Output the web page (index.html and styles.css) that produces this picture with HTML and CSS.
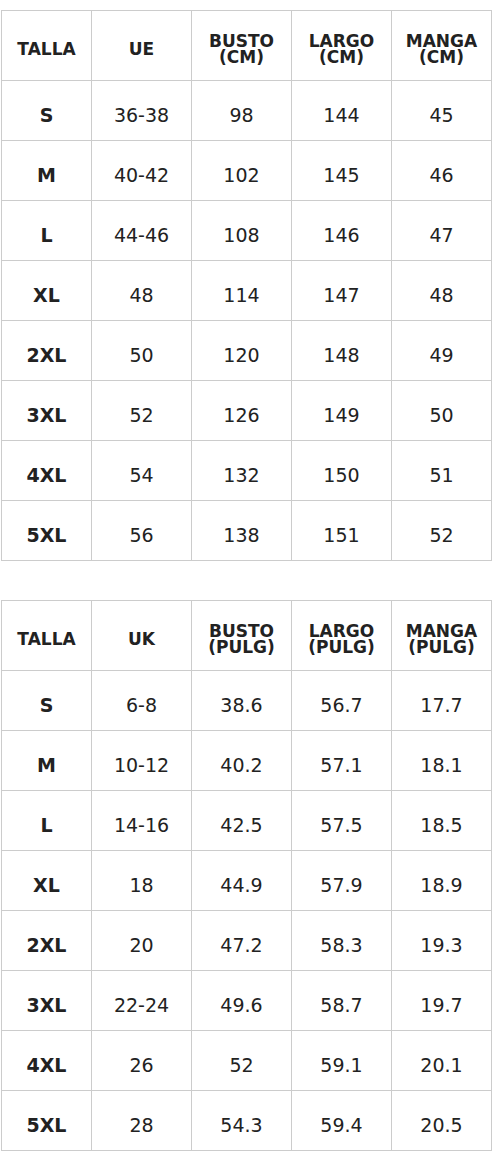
FILE: index.html
```html
<!DOCTYPE html>
<html lang="es">
<head>
<meta charset="utf-8">
<title>Guía de tallas</title>
<link rel="stylesheet" href="styles.css">
</head>
<body>
<div class="size-table">
  <div class="cell head">TALLA</div>
  <div class="cell head">UE</div>
  <div class="cell head">BUSTO<br>(CM)</div>
  <div class="cell head">LARGO<br>(CM)</div>
  <div class="cell head">MANGA<br>(CM)</div>

  <div class="cell size">S</div><div class="cell">36-38</div><div class="cell">98</div><div class="cell">144</div><div class="cell">45</div>
  <div class="cell size">M</div><div class="cell">40-42</div><div class="cell">102</div><div class="cell">145</div><div class="cell">46</div>
  <div class="cell size">L</div><div class="cell">44-46</div><div class="cell">108</div><div class="cell">146</div><div class="cell">47</div>
  <div class="cell size">XL</div><div class="cell">48</div><div class="cell">114</div><div class="cell">147</div><div class="cell">48</div>
  <div class="cell size">2XL</div><div class="cell">50</div><div class="cell">120</div><div class="cell">148</div><div class="cell">49</div>
  <div class="cell size">3XL</div><div class="cell">52</div><div class="cell">126</div><div class="cell">149</div><div class="cell">50</div>
  <div class="cell size">4XL</div><div class="cell">54</div><div class="cell">132</div><div class="cell">150</div><div class="cell">51</div>
  <div class="cell size">5XL</div><div class="cell">56</div><div class="cell">138</div><div class="cell">151</div><div class="cell">52</div>
</div>

<div class="size-table">
  <div class="cell head">TALLA</div>
  <div class="cell head">UK</div>
  <div class="cell head">BUSTO<br>(PULG)</div>
  <div class="cell head">LARGO<br>(PULG)</div>
  <div class="cell head">MANGA<br>(PULG)</div>

  <div class="cell size">S</div><div class="cell">6-8</div><div class="cell">38.6</div><div class="cell">56.7</div><div class="cell">17.7</div>
  <div class="cell size">M</div><div class="cell">10-12</div><div class="cell">40.2</div><div class="cell">57.1</div><div class="cell">18.1</div>
  <div class="cell size">L</div><div class="cell">14-16</div><div class="cell">42.5</div><div class="cell">57.5</div><div class="cell">18.5</div>
  <div class="cell size">XL</div><div class="cell">18</div><div class="cell">44.9</div><div class="cell">57.9</div><div class="cell">18.9</div>
  <div class="cell size">2XL</div><div class="cell">20</div><div class="cell">47.2</div><div class="cell">58.3</div><div class="cell">19.3</div>
  <div class="cell size">3XL</div><div class="cell">22-24</div><div class="cell">49.6</div><div class="cell">58.7</div><div class="cell">19.7</div>
  <div class="cell size">4XL</div><div class="cell">26</div><div class="cell">52</div><div class="cell">59.1</div><div class="cell">20.1</div>
  <div class="cell size">5XL</div><div class="cell">28</div><div class="cell">54.3</div><div class="cell">59.4</div><div class="cell">20.5</div>
</div>
</body>
</html>
```

FILE: styles.css
```css
html, body {
  margin: 0;
  padding: 0;
  background: #ffffff;
}

body {
  padding: 10px 0 10px 1px;
  font-family: "DejaVu Sans", sans-serif;
  color: #222222;
}

.size-table {
  display: grid;
  grid-template-columns: 89px 99px 99px 99px 99px;
  grid-template-rows: 69px repeat(8, 59px);
  gap: 1px;
  width: max-content;
  background: #cccccc;
  border: 1px solid #cccccc;
}

.size-table + .size-table {
  margin-top: 39px;
}

.cell {
  background: #ffffff;
  display: flex;
  align-items: center;
  justify-content: center;
  text-align: center;
  padding-top: 8px;
  box-sizing: border-box;
  font-size: 19px;
  line-height: 22px;
}

.head {
  font-weight: bold;
  font-size: 17px;
  line-height: 15.5px;
}

.size {
  font-weight: bold;
}
```
